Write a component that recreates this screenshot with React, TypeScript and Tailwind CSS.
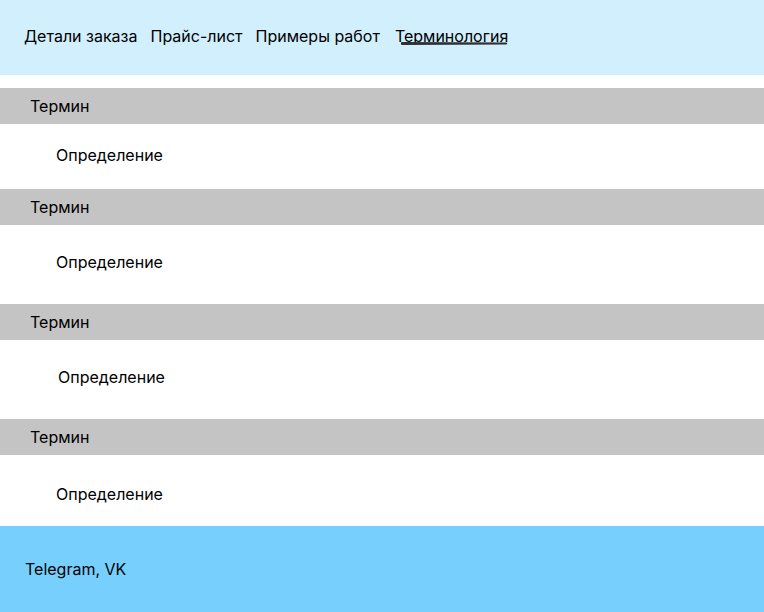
import React from 'react';

const terms = [
  { defH: 'h-[65px]', defPad: 'pt-[19px] pl-[56px]' },
  { defH: 'h-[79px]', defPad: 'pt-[25px] pl-[56px]' },
  { defH: 'h-[79px]', defPad: 'pt-[25px] pl-[58px]' },
  { defH: 'h-[71px]', defPad: 'pt-[27px] pl-[56px]' },
];

const App = () => {
  return (
    <div className="min-h-screen bg-white flex flex-col font-['Inter',sans-serif] text-black">
      <header className="h-[75px] bg-[#d1effd] flex items-center pl-6 pb-[4px]">
        <nav className="flex items-center gap-[13px] text-[16px] leading-6">
          <a>Детали заказа</a>
          <a>Прайс-лист</a>
          <a>Примеры работ</a>
          <a className="relative ml-[2px]">
            Терминология
            <svg className="absolute left-[5px] bottom-[3px] w-[108px] h-[3px]" viewBox="0 0 108 3" preserveAspectRatio="none">
              <path d="M1.5 0 L106.5 0.6 Q108 1.5 106.5 2.4 L1.5 3 Q0 1.5 1.5 0 Z" fill="#2f3234" />
            </svg>
          </a>
        </nav>
      </header>
      <main className="mt-[13px] flex flex-col">
        {terms.map((t, i) => (
          <section key={i}>
            <div className="h-[36px] bg-[#c4c4c4] flex items-center pl-[30px] text-[16px]">Термин</div>
            <div className={`${t.defH} ${t.defPad} text-[16px] leading-6`}>Определение</div>
          </section>
        ))}
      </main>
      <footer className="h-[86px] bg-[#76cffd] flex items-center pl-[25px] text-[16px]">
        Telegram, VK
      </footer>
    </div>
  );
};

export default App;
